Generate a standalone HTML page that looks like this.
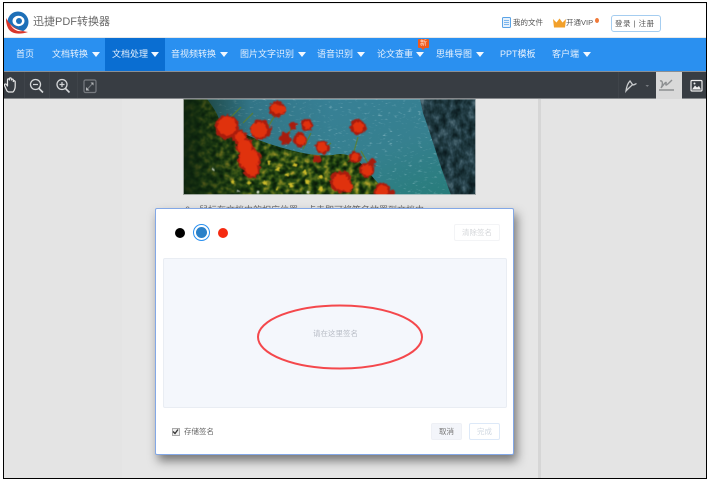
<!DOCTYPE html>
<html lang="zh">
<head>
<meta charset="utf-8">
<style>
html,body{margin:0;padding:0;background:#fff;}
body{width:723px;height:482px;position:relative;overflow:hidden;font-family:"Liberation Sans","Noto Sans CJK SC",sans-serif;}
.a{position:absolute;}
.t{position:absolute;white-space:nowrap;}
#frame{position:absolute;left:3px;top:2px;width:702px;height:475px;border:1px solid #000;overflow:hidden;box-sizing:content-box;}
#inner{position:absolute;left:-4px;top:-3px;width:723px;height:482px;}
.nav{position:absolute;top:48px;font-size:9px;line-height:13px;color:#e6f1fd;white-space:nowrap;filter:blur(.35px);}
.arr{position:absolute;top:52px;width:0;height:0;border-left:4.5px solid transparent;border-right:4.5px solid transparent;border-top:5px solid #f2f8ff;}
</style>
</head>
<body>
<div id="frame"><div id="inner">
  <!-- content background -->
  <div class="a" style="left:0;top:98px;width:723px;height:384px;background:#e4e4e4;"></div>
  <div class="a" style="left:122px;top:98px;width:416px;height:384px;background:#e6e6e6;"></div>
  <div class="a" style="left:538px;top:98px;width:3px;height:384px;background:#d6d6d6;"></div>

  <!-- header -->
  <div class="a" style="left:0;top:3px;width:723px;height:35px;background:#fff;"></div>
  <div class="a" style="left:0;top:3px;width:723px;height:1px;background:#efefef;"></div>
  <div class="a" style="left:0;top:37px;width:723px;height:1px;background:#e8e8e8;"></div>
  <svg class="a" style="left:5px;top:11px;" width="24" height="24" viewBox="0 0 24 24">
    <circle cx="13" cy="11" r="10.500" fill="#1d6fb8"/>
    <ellipse cx="13.500" cy="10" rx="6" ry="5.200" fill="#fff"/>
    <circle cx="14" cy="10" r="3" fill="#1d6fb8"/>
    <path d="M1 7C4 13 10 19 23 21C14 24 6 23 3 17C1.500 14 .8 10 1 7Z" fill="#d9362b"/>
    <path d="M5 13C8 17 12 19 18 20C13 21 8 19 5 13Z" fill="#fff"/>
  </svg>
  <div class="t" style="left:33px;top:14px;font-size:11px;line-height:16px;color:#666;filter:blur(.35px);">迅捷PDF转换器</div>

  <svg class="a" style="left:502px;top:17px;" width="9" height="11" viewBox="0 0 9 11">
    <rect x=".5" y=".5" width="8" height="10" rx="1" fill="#e6f1fc" stroke="#5aa3e6"/>
    <path d="M2 3.500H7M2 5.500H7M2 7.500H7" stroke="#5aa3e6" stroke-width=".8"/>
  </svg>
  <div class="t" style="left:513px;top:17px;font-size:7.500px;line-height:11px;color:#555;filter:blur(.3px);">我的文件</div>
  <svg class="a" style="left:553px;top:18px;" width="13" height="10" viewBox="0 0 13 10">
    <path d="M0 1L3.500 4.500L6.500 .5L9.500 4.500L13 1L12 9.500H1Z" fill="#f2a02a"/>
  </svg>
  <div class="t" style="left:566px;top:17px;font-size:7.500px;line-height:11px;color:#555;filter:blur(.3px);">开通VIP</div>
  <div class="a" style="left:595px;top:18px;width:4px;height:5px;border-radius:50%;background:#f07a3a;"></div>
  <div class="a" style="left:611px;top:15px;width:50px;height:17px;box-sizing:border-box;border:1.500px solid #a5cdf0;border-radius:3px;background:#fff;"></div>
  <div class="t" style="left:615px;top:17.500px;font-size:7.500px;line-height:12px;color:#555;letter-spacing:.5px;filter:blur(.3px);">登录&nbsp;|&nbsp;注册</div>

  <!-- nav -->
  <div class="a" style="left:0;top:38px;width:723px;height:33px;background:#2a90f0;"></div>
  <div class="a" style="left:105px;top:38px;width:60px;height:33px;background:#0a6ed2;"></div>
  <div class="nav" style="left:16px;">首页</div>
  <div class="nav" style="left:52px;">文档转换</div><div class="arr" style="left:92px;"></div>
  <div class="nav" style="left:112px;">文档处理</div><div class="arr" style="left:151px;"></div>
  <div class="nav" style="left:171px;">音视频转换</div><div class="arr" style="left:220px;"></div>
  <div class="nav" style="left:240px;">图片文字识别</div><div class="arr" style="left:298px;"></div>
  <div class="nav" style="left:317px;">语音识别</div><div class="arr" style="left:357px;"></div>
  <div class="nav" style="left:377px;">论文查重</div><div class="arr" style="left:416px;"></div>
  <div class="nav" style="left:436px;">思维导图</div><div class="arr" style="left:476px;"></div>
  <div class="nav" style="left:500px;">PPT模板</div>
  <div class="nav" style="left:552px;">客户端</div><div class="arr" style="left:583px;"></div>
  <div class="a" style="left:418px;top:39px;width:11px;height:9px;background:#ee5a1e;border-radius:1px;"></div>
  <div class="a" style="left:421px;top:48px;width:0;height:0;border-left:2.500px solid transparent;border-right:2.500px solid transparent;border-top:2px solid #ee5a1e;"></div>
  <div class="t" style="left:420px;top:39.500px;font-size:7px;line-height:8px;color:#ffd9c8;">新</div>

  <!-- toolbar -->
  <div class="a" style="left:0;top:71px;width:723px;height:1px;background:#8b8f94;"></div>
  <div class="a" style="left:0;top:72px;width:723px;height:26px;background:#383d43;"></div>
  <div class="a" style="left:0;top:98px;width:723px;height:1px;background:#85888b;"></div>
  <div class="a" style="left:24px;top:72px;width:1px;height:26px;background:#3f444a;"></div>
  <div class="a" style="left:49px;top:72px;width:1px;height:26px;background:#3f444a;"></div>
  <div class="a" style="left:77px;top:72px;width:1px;height:26px;background:#3f444a;"></div>
  <div class="a" style="left:618px;top:72px;width:1px;height:26px;background:#3f444a;"></div>
  <div class="a" style="left:656px;top:72px;width:26px;height:27px;background:#d9d9d9;"></div>
  <svg class="a" style="left:0;top:72px;" width="110" height="27" viewBox="0 0 110 27" fill="none">
    <path d="M7 19L4.500 13.500C4 12 5.500 11.500 6.500 12.500L7.500 14V8C7.500 6.500 9.300 6.500 9.400 8V7C9.500 5.500 11.300 5.500 11.400 7V8C11.500 6.800 13.300 6.800 13.300 8.300V9.500C13.500 8.300 15.200 8.500 15.200 10V14C15.200 17 14 19 13 20H8.500Z" stroke="#e8e8e8" stroke-width="1.200" stroke-linejoin="round"/>
    <circle cx="35.500" cy="12.500" r="5" stroke="#d5d7d9" stroke-width="1.300"/><path d="M39 16.500L43 20.500" stroke="#d5d7d9" stroke-width="1.600"/><path d="M33 12.500H38" stroke="#d5d7d9" stroke-width="1.200"/>
    <circle cx="62" cy="12.500" r="5" stroke="#d5d7d9" stroke-width="1.300"/><path d="M65.500 16.500L69.500 20.500" stroke="#d5d7d9" stroke-width="1.600"/><path d="M59.500 12.500H64.500M62 10V15" stroke="#d5d7d9" stroke-width="1.200"/>
    <rect x="84" y="8" width="12" height="12.500" rx="1.500" stroke="#777b80" stroke-width="1.200"/><path d="M87 17.500L93 11" stroke="#777b80"/><path d="M90.500 10.500H93.500V13.500M86 15V18.500H89.500" fill="#b5b7ba"/>
  </svg>
  <svg class="a" style="left:620px;top:72px;" width="90" height="27" viewBox="0 0 90 27" fill="none">
    <path d="M6 19C6.500 15 8 11 10 9L12.500 12.500C11 14.500 8.500 16 6 19ZM12 13C13.500 13 15 12.500 16.500 11.500" stroke="#c9cbcd" stroke-width="1.300"/>
    <path d="M25.500 13L29 13L27.250 15Z" fill="#777b80"/>
    <path d="M40 9C43 8 43 13 41 16C44 12 47 8 46 12C45 15 49 11 52 8M39 18H54" stroke="#8d8f91" stroke-width="1.400"/>
    <rect x="71" y="8.500" width="11" height="10.500" rx="1" stroke="#eee" stroke-width="1.200"/><path d="M72 17.500L75 13.500L77 15.500L79 14L81 17.500Z" fill="#eee"/><circle cx="74.500" cy="11.500" r="1" fill="#eee"/>
  </svg>

  <!-- picture -->
  <svg class="a" style="left:183px;top:99px;" width="293" height="96" viewBox="0 0 293 96">
    <defs>
      <linearGradient id="wg" x1="0" y1="0" x2="1" y2="1">
        <stop offset="0" stop-color="#38809a"/><stop offset=".6" stop-color="#36808f"/><stop offset="1" stop-color="#267c78"/>
      </linearGradient>
      <linearGradient id="dk" x1="0" y1="0" x2="1" y2="0">
        <stop offset="0" stop-color="#0c220e" stop-opacity=".95"/><stop offset=".14" stop-color="#0c220e" stop-opacity=".6"/><stop offset=".45" stop-color="#0c220e" stop-opacity=".12"/><stop offset="1" stop-color="#0c220e" stop-opacity="0"/>
      </linearGradient>
      <filter id="spark" x="0" y="0" width="100%" height="100%" color-interpolation-filters="sRGB">
        <feTurbulence type="fractalNoise" baseFrequency=".2 .5" numOctaves="2" seed="7"/>
        <feColorMatrix values="0 0 0 0 .85  0 0 0 0 .95  0 0 0 0 .97  1 0 0 0 0"/>
        <feComponentTransfer><feFuncA type="table" tableValues="0 0 0 0 0 0 .4 1 1"/></feComponentTransfer>
        <feGaussianBlur stdDeviation=".35"/>
        <feComposite in2="SourceGraphic" operator="in"/>
      </filter>
      <filter id="wall" x="0" y="0" width="100%" height="100%" color-interpolation-filters="sRGB">
        <feTurbulence type="fractalNoise" baseFrequency=".14 .1" numOctaves="3" seed="3"/>
        <feColorMatrix values="1 0 0 0 0 1 0 0 0 0 1 0 0 0 0 0 0 0 0 1"/>
        <feComponentTransfer>
          <feFuncR type="table" tableValues=".04 .04 .06 .09 .13 .18 .27 .36 .36"/>
          <feFuncG type="table" tableValues=".1 .1 .13 .18 .23 .29 .38 .46 .46"/>
          <feFuncB type="table" tableValues=".12 .12 .15 .2 .26 .33 .42 .5 .5"/>
        </feComponentTransfer>
        <feComposite in2="SourceGraphic" operator="in"/>
      </filter>
      <filter id="fol" x="0" y="0" width="100%" height="100%" color-interpolation-filters="sRGB">
        <feTurbulence type="fractalNoise" baseFrequency=".17" numOctaves="3" seed="11"/>
        <feColorMatrix values="1 0 0 0 0 1 0 0 0 0 1 0 0 0 0 0 0 0 0 1"/>
        <feComponentTransfer>
          <feFuncR type="table" tableValues=".02 .02 .04 .08 .16 .32 .55 .8 .8"/>
          <feFuncG type="table" tableValues=".08 .08 .12 .2 .3 .42 .55 .7 .7"/>
          <feFuncB type="table" tableValues=".02 .02 .04 .05 .08 .1 .14 .2 .2"/>
        </feComponentTransfer>
        <feGaussianBlur stdDeviation=".45"/>
        <feComposite in2="SourceGraphic" operator="in"/>
      </filter>
      <filter id="jag" x="-10%" y="-10%" width="120%" height="120%">
        <feTurbulence type="fractalNoise" baseFrequency=".25" numOctaves="2" seed="5" result="n"/>
        <feDisplacementMap in="SourceGraphic" in2="n" scale="6" xChannelSelector="R" yChannelSelector="G"/>
        <feGaussianBlur stdDeviation=".4"/>
      </filter>
      <filter id="jag2" x="-10%" y="-10%" width="120%" height="120%">
        <feTurbulence type="fractalNoise" baseFrequency=".4" numOctaves="2" seed="9" result="n"/>
        <feDisplacementMap in="SourceGraphic" in2="n" scale="4" xChannelSelector="G" yChannelSelector="R"/>
        <feGaussianBlur stdDeviation=".4"/>
      </filter>
    </defs>
    <rect width="293" height="96" fill="url(#wg)"/>
    <rect width="293" height="96" fill="#fff" filter="url(#spark)" opacity=".4"/>
    <path d="M237 0H293V96H268C258 70 248 36 240 14Z" fill="#fff" filter="url(#wall)"/>
    <!-- foliage -->
    <path d="M0 0H24C30 8 34 14 36 20C50 30 70 40 90 46C110 52 130 58 150 56C165 52 175 60 185 72C192 82 200 90 212 96H0Z" fill="#fff" filter="url(#fol)"/>
    <rect x="0" y="0" width="150" height="96" fill="url(#dk)"/>
    <!-- stems above the foliage -->
    <path d="M46 20L58 8M84 30L92 16M100 40L112 26M120 50L128 34M140 52L148 44M170 56L175 38M60 24L70 14M186 66L178 52" stroke="#5c7e2c" stroke-width="1.300" fill="none" opacity=".8"/>
    <!-- yellow blossoms -->
    <g fill="#cdbb2a" filter="url(#jag2)">
      <circle cx="86" cy="63" r="1.800"/><circle cx="95" cy="70" r="2"/><circle cx="112" cy="66" r="2"/><circle cx="122" cy="73" r="2"/><circle cx="104" cy="76" r="1.800"/><circle cx="82" cy="84" r="2.300"/><circle cx="66" cy="84" r="1.800"/><circle cx="108" cy="86" r="2.400"/><circle cx="124" cy="83" r="2"/><circle cx="138" cy="78" r="2"/><circle cx="138" cy="90" r="1.800"/><circle cx="50" cy="83" r="1.800"/><circle cx="94" cy="90" r="1.600"/>
    </g>
    <g fill="#e6ecd8" filter="url(#jag2)">
      <circle cx="30" cy="70" r="1.300"/><circle cx="75" cy="93" r="1.300"/><circle cx="55" cy="92" r="1.300"/><circle cx="125" cy="93" r="1.200"/>
    </g>
    <!-- petals, dark base -->
    <g fill="#a81c0c" filter="url(#jag)">
      <circle cx="44" cy="28" r="12"/><circle cx="78" cy="31" r="10"/><circle cx="94" cy="10" r="8"/><circle cx="57" cy="38" r="7"/><circle cx="62" cy="48" r="9"/><circle cx="67" cy="61" r="12"/><circle cx="69" cy="71" r="8"/><circle cx="117" cy="41" r="7"/><circle cx="102" cy="39" r="6"/><circle cx="139" cy="48" r="7"/><circle cx="175" cy="28" r="8"/><circle cx="172" cy="58" r="6"/><circle cx="184" cy="71" r="7"/><circle cx="189" cy="64" r="4"/><circle cx="158" cy="83" r="11"/><circle cx="199" cy="92" r="8"/><circle cx="124" cy="26" r="6"/><circle cx="110" cy="27" r="4"/><circle cx="134" cy="60" r="4"/><circle cx="209" cy="94" r="3"/>
    </g>
    <!-- petals, bright -->
    <g fill="#e0310f" filter="url(#jag2)">
      <circle cx="44" cy="27" r="9.500"/><circle cx="76" cy="31" r="8"/><circle cx="93" cy="10" r="5"/><circle cx="99" cy="11" r="4"/><circle cx="57" cy="38" r="5"/><circle cx="62" cy="48" r="7"/><circle cx="66" cy="60" r="10"/><circle cx="69" cy="71" r="6"/><circle cx="118" cy="41" r="5"/><circle cx="139" cy="48" r="5"/><circle cx="175" cy="28" r="5.500"/><circle cx="184" cy="71" r="5.500"/><circle cx="158" cy="83" r="8"/><circle cx="165" cy="88" r="5"/><circle cx="199" cy="92" r="6"/><circle cx="124" cy="26" r="4"/><circle cx="172" cy="58" r="4"/>
    </g>
    <rect x=".5" y="0" width="292" height="95.500" fill="none" stroke="#d8d8d8" stroke-width="1" opacity=".7"/>
  </svg>

  <div class="t" style="left:185px;top:204px;font-size:9px;line-height:13px;color:#666;filter:blur(.35px);">6、鼠标在文档中的相应位置，点击即可将签名放置到文档中</div>

  <!-- dialog -->
  <div class="a" style="left:155px;top:208px;width:359px;height:247px;box-sizing:border-box;background:#fff;border:1px solid #83a8e6;border-radius:2px;box-shadow:3px 6px 10px rgba(60,60,60,.65);"></div>
  <div class="a" style="left:175px;top:228px;width:10px;height:10px;border-radius:50%;background:#000;"></div>
  <div class="a" style="left:193px;top:224px;width:17px;height:17px;box-sizing:border-box;border-radius:50%;border:1.500px solid #2a90f0;background:#fff;"></div>
  <div class="a" style="left:196px;top:227px;width:11px;height:11px;border-radius:50%;background:#2a80c8;"></div>
  <div class="a" style="left:218px;top:228px;width:10px;height:10px;border-radius:50%;background:#f52a10;"></div>
  <div class="a" style="left:454px;top:224px;width:46px;height:17px;box-sizing:border-box;border:1px solid #f3f4f6;border-radius:2px;"></div>
  <div class="t" style="left:462px;top:227px;font-size:7.500px;line-height:11px;color:#d5d7da;filter:blur(.35px);">清除签名</div>
  <div class="a" style="left:163px;top:258px;width:344px;height:150px;box-sizing:border-box;background:#f4f7fc;border:1px solid #e9edf3;border-radius:2px;"></div>
  <div class="t" style="left:313px;top:328px;font-size:7.500px;line-height:11px;color:#b8bdc6;filter:blur(.35px);">请在这里签名</div>
  <svg class="a" style="left:250px;top:298px;" width="180" height="80" viewBox="0 0 180 80"><ellipse cx="90" cy="39" rx="82" ry="31.500" fill="none" stroke="#f4484c" stroke-width="2"/></svg>

  <div class="a" style="left:172px;top:428px;width:6px;height:6px;background:#eee;border:.5px solid #aaa;"></div>
  <svg class="a" style="left:172px;top:428px;" width="7" height="7" viewBox="0 0 7 7"><path d="M1 3.500L3 5.500L6 1.500" stroke="#333" stroke-width="1.300" fill="none"/></svg>
  <div class="t" style="left:184px;top:426px;font-size:7.500px;line-height:11px;color:#666;filter:blur(.35px);">存储签名</div>
  <div class="a" style="left:431px;top:423px;width:31px;height:17px;box-sizing:border-box;background:#f3f5fa;border:1px solid #eef0f5;border-radius:2px;"></div>
  <div class="t" style="left:439px;top:426px;font-size:7.500px;line-height:11px;color:#777;filter:blur(.35px);">取消</div>
  <div class="a" style="left:469px;top:423px;width:31px;height:17px;box-sizing:border-box;background:#fff;border:1px solid #dde9f8;border-radius:2px;"></div>
  <div class="t" style="left:477px;top:426px;font-size:7.500px;line-height:11px;color:#d0d8e2;filter:blur(.35px);">完成</div>
</div></div>
</body>
</html>
